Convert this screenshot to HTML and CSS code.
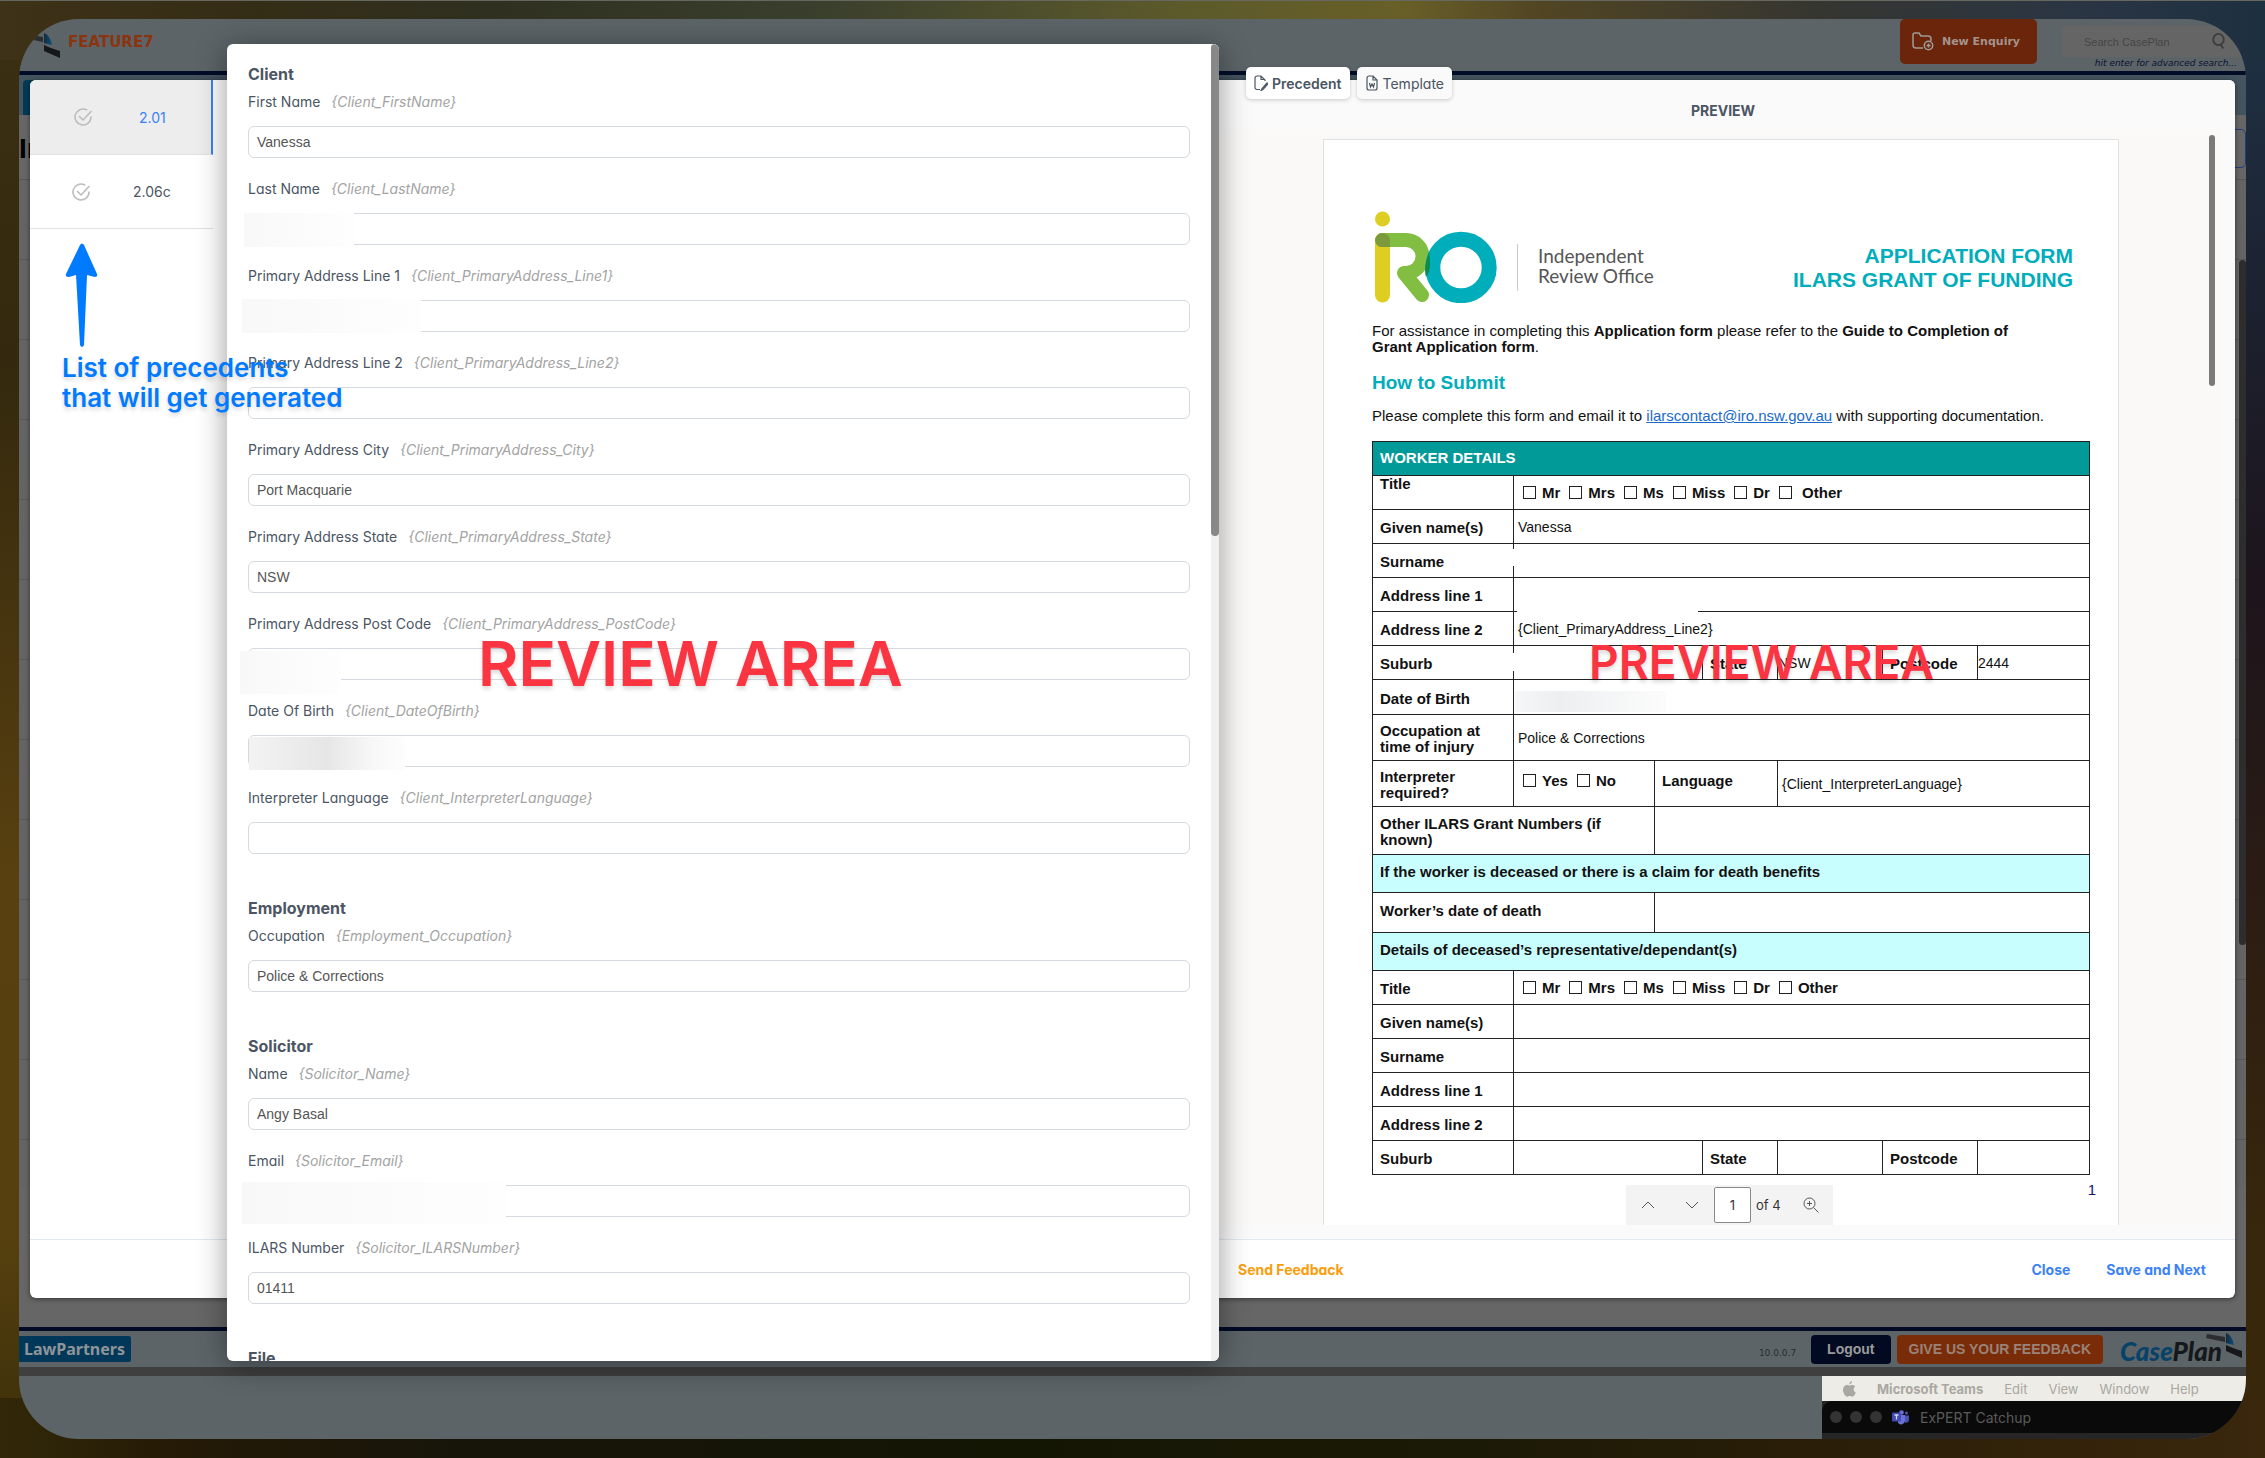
FILE: index.html
```html
<!DOCTYPE html>
<html lang="en">
<head>
<meta charset="utf-8">
<title>CasePlan - Precedents</title>
<link rel="stylesheet" href="styles.css">
</head>
<body>
<svg class="defs" width="0" height="0" aria-hidden="true">
  <defs>
    <linearGradient id="wing" x1="0" x2="1"><stop offset="0" stop-color="#14293a"/><stop offset="1" stop-color="#0a5180"/></linearGradient>
    <symbol id="swoosh" viewBox="0 0 36 26">
      <path d="M1 1 19 4v5L0 5z" fill="#2b2d2f"/>
      <path d="M20 0q6 2 8 12l-8-2z" fill="url(#wing)"/>
      <path d="M20 12q6 3 16 6v7l-16-7z" fill="#151719"/>
    </symbol>
    <symbol id="check" viewBox="0 0 18 18">
      <path d="M12.500 1.800A8 8 0 1 0 17 9M5.500 8.500l3.500 3.500 8-8.500" fill="none" stroke="#bdbdbd" stroke-width="1.600" stroke-linecap="round" stroke-linejoin="round"/>
    </symbol>
  </defs>
</svg>

<div class="desktop">
  <header class="topbar">
    <svg class="topbar-mark" width="36" height="26"><use href="#swoosh"/></svg>
    <strong class="env">FEATURE7</strong>
    <button class="enquiry" type="button">
      <svg width="22" height="19" viewBox="0 0 22 19" fill="none" stroke="#a09a98" stroke-width="1.500"><path d="M11 16H4a3 3 0 0 1-3-3V3a2 2 0 0 1 2-2h4l2 3h7a3 3 0 0 1 3 3v2"/><circle cx="16.500" cy="13.500" r="4.200"/><path d="M16.500 11.500v4M14.500 13.500h4"/></svg>
      New Enquiry
    </button>
    <div class="search">
      <div class="search-box">
        <input type="search" placeholder="Search CasePlan" aria-label="Search CasePlan">
        <svg width="14" height="17" viewBox="0 0 14 17" fill="none" stroke="#3c3c3c" stroke-width="1.800"><ellipse cx="6.500" cy="6.500" rx="5.300" ry="5.600"/><path d="m8.500 11.500 3 4"/></svg>
      </div>
      <em>hit enter for advanced search...</em>
    </div>
  </header>
  <div class="subnav"><span class="subnav-tab"></span></div>
  <div class="backdrop-page">
    <div class="page-title">Invoice<span class="outline-box"></span></div>
    <div class="page-rows"></div>
    <span class="page-scroll"></span>
  </div>
  <footer class="bottombar">
    <span class="lawpartners">LawPartners</span>
    <span class="version">10.0.0.7</span>
    <button class="logout" type="button">Logout</button>
    <button class="feedback" type="button">GIVE US YOUR FEEDBACK</button>
    <span class="brand"><b><i>Case</i>Plan</b><svg width="36" height="26"><use href="#swoosh"/></svg></span>
  </footer>
  <div class="dock">
    <div class="teams">
      <nav class="menubar">
        <svg width="13" height="16" viewBox="0 0 13 16" fill="#a9a7a2"><path d="M9 0c.2 1.700-1.200 3.300-2.600 3.400C6.200 1.800 7.500.2 9 0zM6.600 4.600C7.400 4.600 8 4 9.300 4c1.200 0 2.300.6 3 1.600-2.500 1.500-2.100 4.900.5 5.900-.7 2-2 4.200-3.500 4.200-1 0-1.300-.6-2.500-.6s-1.600.6-2.500.6C2.200 15.700 0 12 0 8.800 0 5.700 2 4.100 3.900 4.100c1.200 0 2 .5 2.700.5z"/></svg>
        <strong>Microsoft Teams</strong><span>Edit</span><span>View</span><span>Window</span><span>Help</span>
      </nav>
      <div class="titlebar">
        <i></i><i></i><i></i>
        <svg width="17" height="15" viewBox="0 0 17 15"><circle cx="9.500" cy="2.500" r="2.300" fill="#6a71cf"/><circle cx="14.500" cy="3" r="1.600" fill="#4a51ae"/><path d="M6 5h7v6a4 4 0 0 1-7 2z" fill="#6b72d4"/><path d="M13 5.500h4V10a3 3 0 0 1-4 2.500z" fill="#4a51ae"/><rect y="2.500" width="9" height="9" rx="1" fill="#4049b5"/><path d="M2.500 5h4M4.500 5v4.500" stroke="#d5d8f5" stroke-width="1.300"/></svg>
        <span>ExPERT Catchup</span>
      </div>
    </div>
  </div>

  <section class="modal" role="dialog" aria-label="Review precedents">
    <nav class="precedents">
      <button class="precedent active" type="button"><svg width="18" height="18"><use href="#check"/></svg><span>2.01</span></button>
      <button class="precedent" type="button"><svg width="18" height="18"><use href="#check"/></svg><span>2.06c</span></button>
    </nav>
    <div class="preview">
      <h2 class="preview-title">PREVIEW</h2>
      <div class="viewer">
        <article class="sheet">
          <div class="letterhead">
            <svg width="126" height="92" viewBox="0 0 126 92" fill="none" stroke-linecap="round" stroke-linejoin="round">
              <circle cx="10.500" cy="8" r="7.500" fill="#dece22"/>
              <path d="M10.500 29.500v54.500" stroke="#dece22" stroke-width="15"/>
              <path d="M10.500 29H34a16.500 16.500 0 0 1 0 33H32l18 22" stroke="#82be41" stroke-width="14"/>
              <path d="M10.500 22A7.500 7.500 0 0 0 3 29.500 7 7 0 0 0 10 36h8v-7a7.500 7.500 0 0 0-7.500-7z" fill="#7a9a3c"/>
              <circle cx="89" cy="56.500" r="28.200" stroke="#00adbb" stroke-width="15"/>
              <path d="M57.300 41q-6 14-3.300 25 4-5 4-13 0-7-.7-12z" fill="#0c8a4b"/>
            </svg>
            <p class="office">Independent<br>Review Office</p>
            <h1>APPLICATION FORM<br>ILARS GRANT OF FUNDING</h1>
          </div>
          <p>For assistance in completing this <b>Application form</b> please refer to the <b>Guide to Completion of<br>Grant Application form</b>.</p>
          <h2>How to Submit</h2>
          <p>Please complete this form and email it to <a href="mailto:ilarscontact@iro.nsw.gov.au">ilarscontact@iro.nsw.gov.au</a> with supporting documentation.</p>
          <table>
            <colgroup><col class="c1"><col class="c2"><col class="c3"><col class="c4"><col class="c5"><col class="c6"><col class="c7"></colgroup>
            <tbody>
            <tr><th colspan="7" class="band">WORKER DETAILS</th></tr>
            <tr class="top"><th>Title</th><td colspan="6"><div class="ticks"><label><input type="checkbox">Mr</label><label><input type="checkbox">Mrs</label><label><input type="checkbox">Ms</label><label><input type="checkbox">Miss</label><label><input type="checkbox">Dr</label><label><input type="checkbox">&nbsp;Other</label></div></td></tr>
            <tr><th>Given name(s)</th><td colspan="6">Vanessa</td></tr>
            <tr><th>Surname</th><td colspan="6"><span class="mask mask-surname"></span></td></tr>
            <tr><th>Address line 1</th><td colspan="6"><span class="mask mask-line"></span></td></tr>
            <tr><th>Address line 2</th><td colspan="6">{Client_PrimaryAddress_Line2}</td></tr>
            <tr><th>Suburb</th><td colspan="2"><span class="mask mask-suburb"></span></td><th>State</th><td class="tight">NSW</td><th>Postcode</th><td class="tight">2444</td></tr>
            <tr class="r35"><th>Date of Birth</th><td colspan="6"><span class="mask mask-birth"></span></td></tr>
            <tr class="r46"><th>Occupation at time of injury</th><td colspan="6">Police &amp; Corrections</td></tr>
            <tr class="r46"><th>Interpreter required?</th><td><div class="ticks"><label><input type="checkbox">Yes</label><label><input type="checkbox">No</label></div></td><th colspan="2" class="raised">Language</th><td colspan="3">{Client_InterpreterLanguage}</td></tr>
            <tr class="r48"><th colspan="2">Other ILARS Grant Numbers (if known)</th><td colspan="5"></td></tr>
            <tr class="r38"><th colspan="7" class="sub">If the worker is deceased or there is a claim for death benefits</th></tr>
            <tr class="r40"><th colspan="2">Worker’s date of death</th><td colspan="5"></td></tr>
            <tr class="r38"><th colspan="7" class="sub">Details of deceased’s representative/dependant(s)</th></tr>
            <tr><th>Title</th><td colspan="6"><div class="ticks"><label><input type="checkbox">Mr</label><label><input type="checkbox">Mrs</label><label><input type="checkbox">Ms</label><label><input type="checkbox">Miss</label><label><input type="checkbox">Dr</label><label><input type="checkbox">Other</label></div></td></tr>
            <tr><th>Given name(s)</th><td colspan="6"></td></tr>
            <tr><th>Surname</th><td colspan="6"></td></tr>
            <tr><th>Address line 1</th><td colspan="6"></td></tr>
            <tr><th>Address line 2</th><td colspan="6"></td></tr>
            <tr><th>Suburb</th><td colspan="2"></td><th>State</th><td></td><th>Postcode</th><td></td></tr>
            </tbody>
          </table>
          <p class="page-no">1</p>
        </article>
        <span class="viewer-scroll"></span>
        <div class="pager">
          <button type="button" aria-label="Previous page"><svg width="14" height="8" viewBox="0 0 14 8" fill="none" stroke="#555"><path d="m1 7 6-6 6 6"/></svg></button>
          <button type="button" aria-label="Next page"><svg width="14" height="8" viewBox="0 0 14 8" fill="none" stroke="#555"><path d="m1 1 6 6 6-6"/></svg></button>
          <input type="text" value="1" aria-label="Page"><span>of 4</span>
          <button type="button" aria-label="Zoom in"><svg width="16" height="16" viewBox="0 0 16 16" fill="none" stroke="#555"><circle cx="6.500" cy="6.500" r="5.500"/><path d="M6.500 4v5M4 6.500h5M10.500 10.500l5 5"/></svg></button>
        </div>
      </div>
    </div>
    <footer class="actions">
      <button class="send" type="button">Send Feedback</button>
      <button type="button">Close</button>
      <button type="button">Save and Next</button>
    </footer>
    <div class="tabs">
      <button class="on" type="button"><svg width="14" height="16" viewBox="0 0 14 16" fill="none" stroke="#4b5563" stroke-width="1.200"><path d="M6 14.500H3A2 2 0 0 1 1 12.500V3a2 2 0 0 1 2-2h4l4 4v1M7 1v3.500h4M13 8l-5 5.500-1 2 2-1 4.500-5z"/></svg>Precedent</button>
      <button type="button"><svg width="14" height="16" viewBox="-1 0 14 16" fill="none" stroke="#4b5563" stroke-width="1.200"><path d="M7 1H3a2 2 0 0 0-2 2v10a2 2 0 0 0 2 2h6a2 2 0 0 0 2-2V5zM7 1v4h4M3.500 8l1 4L6 9l1.500 3 1-4"/></svg>Template</button>
    </div>

    <form class="review">
      <div class="review-body">
        <fieldset>
          <legend>Client</legend>
          <div class="field"><label for="f1">First Name <i>{Client_FirstName}</i></label><input id="f1" value="Vanessa"></div>
          <div class="field"><label for="f2">Last Name <i>{Client_LastName}</i></label><input id="f2"><span class="blur blur-last"></span></div>
          <div class="field"><label for="f3">Primary Address Line 1 <i>{Client_PrimaryAddress_Line1}</i></label><input id="f3"><span class="blur blur-line"></span></div>
          <div class="field"><label for="f4">Primary Address Line 2 <i>{Client_PrimaryAddress_Line2}</i></label><input id="f4"></div>
          <div class="field"><label for="f5">Primary Address City <i>{Client_PrimaryAddress_City}</i></label><input id="f5" value="Port Macquarie"></div>
          <div class="field"><label for="f6">Primary Address State <i>{Client_PrimaryAddress_State}</i></label><input id="f6" value="NSW"></div>
          <div class="field"><label for="f7">Primary Address Post Code <i>{Client_PrimaryAddress_PostCode}</i></label><input id="f7"><span class="blur blur-post"></span></div>
          <div class="field"><label for="f8">Date Of Birth <i>{Client_DateOfBirth}</i></label><input id="f8"><span class="blur blur-birth"></span></div>
          <div class="field"><label for="f9">Interpreter Language <i>{Client_InterpreterLanguage}</i></label><input id="f9"></div>
        </fieldset>
        <fieldset>
          <legend>Employment</legend>
          <div class="field"><label for="f10">Occupation <i>{Employment_Occupation}</i></label><input id="f10" value="Police &amp; Corrections"></div>
        </fieldset>
        <fieldset>
          <legend>Solicitor</legend>
          <div class="field"><label for="f11">Name <i>{Solicitor_Name}</i></label><input id="f11" value="Angy Basal"></div>
          <div class="field"><label for="f12">Email <i>{Solicitor_Email}</i></label><input id="f12"><span class="blur blur-email"></span></div>
          <div class="field"><label for="f13">ILARS Number <i>{Solicitor_ILARSNumber}</i></label><input id="f13" value="01411"></div>
        </fieldset>
        <fieldset>
          <legend>File</legend>
        </fieldset>
      </div>
      <div class="review-scroll"><span></span></div>
    </form>
  </section>
</div>

<svg class="note-arrow" width="34" height="108" viewBox="0 0 34 108" fill="#007aff"><path d="M15 2q2-3 4 0l13 29q1 3-2 3l-8-2-3 70q-2 4-4 0l-4-70-7 2q-4 0-3-3z"/></svg>
<p class="note note-list">List of precedents<br>that will get generated</p>
<p class="note note-review">REVIEW AREA</p>
<p class="note note-preview">PREVIEW AREA</p>
</body>
</html>
```
FILE: styles.css
```css
* { box-sizing: border-box; }
body, p, h1, h2, fieldset, legend { margin: 0; padding: 0; border: 0; }
button { border: 0; background: none; padding: 0; font: inherit; color: inherit; cursor: pointer; }
input { font: inherit; color: inherit; }
.defs { position: absolute; }

body {
  position: relative;
  height: 100vh;
  padding: 18px 19px 19px;
  overflow: hidden;
  border-top: 1px solid #66675e;
  font-family: Inter, "Liberation Sans", sans-serif;
  background:
    linear-gradient(90deg, #3e3218 0%, #352d15 10%, #2f3020 22%, #3a3f2d 36%, #5c5a2b 52%, #685f28 62%, #514523 68%, #363630 80%, #2a3544 92%, #1d3040 100%) top / 100% 60px no-repeat,
    linear-gradient(90deg, #322808 0%, #241a06 8%, #17150a 20%, #141604 45%, #1b1a06 65%, #2a1e08 80%, #3a270c 100%) bottom / 100% 60px no-repeat,
    linear-gradient(#3b3012, #34290e 25%, #584010 60%, #56400f 85%, #3a2e0a) left / 60px 100% no-repeat,
    linear-gradient(#1f3347, #1c2230 20%, #1d141c 40%, #2a1c14 60%, #38270c 85%, #3a270b) right / 60px 100% no-repeat,
    #222;
}

/* Dimmed application window */
.desktop {
  position: relative;
  height: 100%;
  display: flex;
  flex-direction: column;
  border-radius: 60px;
  overflow: hidden;
  background: #5c6468;
}
.topbar {
  display: flex;
  align-items: flex-start;
  height: 56px;
  border-bottom: 4px solid #020c26;
}
.topbar-mark { margin: 14px 0 0 5px; }
.env { margin: 13px auto 0 8px; font: bold 15px/20px "DejaVu Sans", sans-serif; color: #8a3410; }
.enquiry {
  display: flex;
  align-items: center;
  gap: 8px;
  height: 45px;
  padding: 0 17px 0 12px;
  border-radius: 5px;
  background: #6b250a;
  color: #a3938c;
  font: bold 11px/16px "DejaVu Sans", sans-serif;
}
.search { width: 184px; margin-left: 25px; padding-top: 7px; text-align: right; }
.search-box { display: flex; align-items: center; height: 31px; padding: 0 20px; border-radius: 3px; background: #656565; }
.search-box input { width: 100%; min-width: 0; border: 0; background: none; font: 11px/16px "Liberation Sans", sans-serif; }
.search-box input::placeholder { color: #454545; }
.search-box svg { flex: none; }
.search em { display: block; margin-right: 9px; font: italic 9px/13px "DejaVu Sans", sans-serif; color: #0b1233; white-space: nowrap; }
.subnav { height: 40px; padding: 5px 4px 0; background: #44545f; }
.subnav-tab { display: block; width: 120px; height: 35px; border-radius: 4px 0 0; background: #023a54; }
.backdrop-page { position: relative; flex: 1; display: flex; flex-direction: column; background: #666; }
.page-title { display: flex; justify-content: space-between; height: 64px; padding-top: 14px; font: bold 28px/40px "Liberation Sans", sans-serif; color: #000; }
.outline-box { width: 60px; height: 39px; border: 1px solid #1e3f7a; border-radius: 5px; }
.page-rows { height: 1008px; background: repeating-linear-gradient(#575757 0 1px, #646464 1px 80px); }
.page-scroll { position: absolute; right: 0; top: 145px; width: 7px; height: 685px; border-radius: 4px; background: #2d2d2d; }
.bottombar {
  display: flex;
  align-items: center;
  height: 40px;
  padding-right: 4px;
  border-top: 4px solid #020a26;
}
.lawpartners { margin-right: auto; padding: 0 6px 0 5px; border-radius: 0 2px 2px 0; background: #01385a; color: #8f9498; font: bold 16px/26px "Noto Sans", sans-serif; }
.version { margin: 8px 15px 0 0; font: 9px/12px "DejaVu Sans", sans-serif; color: #2a2d30; }
.logout, .feedback { height: 29px; border-radius: 4px; color: #9a9a9a; font: bold 14px/20px "Liberation Sans", sans-serif; }
.logout { padding: 0 16px; background: #020a22; }
.feedback { margin: 0 17px 0 6px; padding: 0 12px; background: #7a2c08; color: #998277; }
.brand { display: flex; align-items: center; font: italic bold 26px/30px Lato, sans-serif; color: #15181a; }
.brand i { color: #074268; }
.brand b { padding-top: 4px; }
.brand svg { margin: 0 0 6px -16px; }
.dock { height: 72px; display: flex; justify-content: flex-end; border-top: 9px solid #3f3f3f; }
.teams { width: 424px; background: #262626; }
.menubar { display: flex; align-items: center; gap: 21px; height: 25px; padding-left: 21px; background: #eeece6; color: #a9a7a2; font-size: 13px; line-height: 20px; }
.titlebar { display: flex; align-items: center; gap: 8px; height: 32px; padding-left: 8px; border-radius: 10px 0 0; background: #0a0a0a; color: #5a5a5a; font-size: 14px; }
.titlebar i { width: 12px; height: 12px; border-radius: 50%; background: #333; }
.titlebar svg { margin: 0 3px 0 2px; }

/* Modal */
.modal {
  position: absolute;
  inset: 61px 11px 141px;
  display: grid;
  grid-template: "list preview" 1fr "foot foot" 59px / 183px 1fr;
  border-radius: 6px;
  background: #fff;
  box-shadow: 0 1px 5px rgba(0, 0, 0, .5);
  color: #4b5563;
}
.precedents { grid-area: list; }
.precedent { display: flex; align-items: center; width: 100%; height: 74px; border-bottom: 1px solid #e2e2e2; font-size: 14px; }
.precedent svg { margin-left: 42px; }
.precedent span { margin-left: 43px; }
.precedent.active { height: 75px; border-right: 2px solid #3b82f6; border-radius: 6px 0 0; background: #ededed; color: #3b82f6; }
.precedent.active svg { margin-left: 44px; }
.precedent.active span { margin-left: 47px; }
.preview { grid-area: preview; width: 1024px; justify-self: end; display: flex; flex-direction: column; min-height: 0; padding: 0 13px 14px; border-radius: 0 6px 0 0; background: #fafafa; }
.preview-title { padding: 21px 0 8px; font-size: 14px; line-height: 20px; font-weight: 700; text-align: center; }
.viewer { position: relative; flex: 1; min-height: 0; padding: 10px 99px 0; overflow: hidden; background: #faf9f8; }
.actions { grid-area: foot; display: flex; align-items: center; gap: 36px; padding-right: 29px; border-top: 1px solid #e2e8f0; font-size: 14px; font-weight: 700; color: #3b82f6; }
.actions, .preview-title, .tabs, .review label, .review legend { font-feature-settings: "cv11"; }
.actions .send { margin-left: 1208px; margin-right: auto; color: #f99d0c; }
.tabs { position: absolute; top: -13px; left: 1216px; display: flex; gap: 7px; font-size: 14px; }
.tabs button { display: flex; align-items: center; gap: 4px; height: 32px; padding: 0 8px; border-radius: 5px; background: #fafafa; box-shadow: 0 1px 4px rgba(0, 0, 0, .2); }
.tabs .on { background: #fff; font-weight: 600; }

/* Document sheet */
.sheet {
  width: 796px;
  height: 1126px;
  padding: 71px 28px 0 48px;
  border: 1px solid #dfe1e3;
  background: #fff;
  color: #111;
  font: 15px/16px "Liberation Sans", Arial, sans-serif;
}
.letterhead { display: flex; margin-bottom: 20px; }
.office { margin: 33px 0 0 19px; padding-left: 20px; border-left: 1px solid #ccc; height: 47px; font: 19px/20px Lato, sans-serif; color: #555; padding-top: 2px; }
.letterhead h1 { margin: 33px 17px 0 auto; font-size: 21px; line-height: 24px; text-align: right; color: #00adbb; }
.sheet h2 { margin: 16px 0 13px; font-size: 19px; line-height: 24px; color: #00adbb; }
.sheet a { color: #1b6ac9; }
.sheet table { width: 100%; margin-top: 17px; border-collapse: collapse; table-layout: fixed; }
.c1, .c2 { width: 141px; }
.c3 { width: 48px; }
.c4 { width: 75px; }
.c5 { width: 105px; }
.c6 { width: 95px; }
.sheet tr { height: 34px; }
.sheet tr.r35 { height: 35px; }
.sheet tr.r38 { height: 38px; }
.sheet tr.r40 { height: 40px; }
.sheet tr.r46 { height: 46px; }
.sheet tr.r48 { height: 48px; }
.sheet th, .sheet td { padding: 0 7px; border: 1px solid #222; text-align: left; }
.sheet th { padding-top: 3px; }
.sheet td { position: relative; padding-left: 4px; font-size: 14px; }
.sheet td.tight { padding-left: 0; }
.sheet .r38 th, .sheet .r40 th { padding: 0 7px 4px; }
.sheet .raised { padding: 0 7px 6px; }
.sheet .band { height: 33px; padding: 0 7px 2px; background: #029a98; color: #fff; }
.sheet .sub { background: #c9feff; }
.sheet .top th { padding-top: 0; vertical-align: top; }
.ticks { display: flex; gap: 9px; padding-left: 5px; font-size: 15px; font-weight: bold; }
.ticks label { display: flex; align-items: center; gap: 6px; }
.ticks input { appearance: none; width: 13px; height: 13px; margin: 0; border: 1px solid #222; }
.r46 .ticks { padding-bottom: 6px; }
.page-no { margin: 7px -6px 0 0; text-align: right; color: #14146e; }
.mask { position: absolute; background: #fff; }
.mask-surname { left: -2px; top: 5px; width: 70px; height: 17px; }
.mask-line { left: 3px; top: 4px; width: 181px; height: 32px; }
.mask-suburb { left: -2px; top: 7px; width: 60px; height: 18px; }
.mask-birth { left: 1px; top: 11px; width: 151px; height: 21px; background: linear-gradient(90deg, #f6f7f8, #eceef0 30%, #f4f5f6 60%, #fcfcfc); }
.viewer-scroll { position: absolute; top: 6px; right: 7px; width: 6px; height: 251px; border-radius: 3px; background: #7a7a78; }
.pager { position: absolute; left: 402px; bottom: 0; display: flex; align-items: center; width: 207px; height: 40px; background: #f3f3f3; font-size: 13px; color: #333; }
.pager button { display: flex; justify-content: center; width: 44px; }
.pager input { width: 37px; height: 36px; padding: 0; border: 1px solid #888; border-radius: 2px; background: #fff; text-align: center; }
.pager span { width: 38px; padding-left: 5px; white-space: nowrap; }

/* Review form */
.review {
  position: absolute;
  left: 197px;
  top: -36px;
  bottom: -63px;
  width: 45%;
  display: flex;
  border-radius: 6px;
  overflow: hidden;
  background: #fff;
  box-shadow: 0 4px 30px rgba(0, 0, 0, .4);
}
.review-body { flex: 1; padding: 17px 21px 0; }
.review fieldset { min-width: 0; margin-bottom: 20px; }
.review legend { display: block; margin-bottom: 5px; font-size: 16px; line-height: 26px; font-weight: 700; }
.field { position: relative; display: flex; flex-direction: column; gap: 14px; margin-bottom: 21px; }
.field label { font-size: 14px; line-height: 20px; }
.field i { margin-left: 7px; color: #a3a3a3; }
.field input { height: 32px; padding: 0 8px; border: 1px solid #d5d9e0; border-radius: 6px; font: 14px/20px "Liberation Sans", sans-serif; color: #555; }
.blur { position: absolute; left: -6px; background: linear-gradient(90deg, #f8f8f8, #fbfbfb 50%, #fefefe); }
.blur-last { left: -4px; top: 34px; width: 110px; height: 34px; }
.blur-line { top: 33px; width: 179px; height: 34px; }
.blur-post { left: -8px; top: 37px; width: 101px; height: 43px; }
.blur-birth { left: 1px; top: 36px; width: 156px; height: 33px; background: linear-gradient(90deg, #f3f3f3, #e6e6e6 50%, #f8f8f8 80%, #fdfdfd); }
.blur-email { top: 31px; width: 264px; height: 42px; }
.review-scroll { width: 8px; background: #f0f0f0; }
.review-scroll span { display: block; height: 492px; border-radius: 4px; background: #888; }

/* Annotations drawn over the window */
.note { position: absolute; font-weight: 600; white-space: nowrap; text-shadow: 0 3px 4px rgba(0, 0, 0, .15); }
.note-list { left: 62px; top: 352px; font-size: 26px; line-height: 30px; color: #007aff; }
.note-arrow { position: absolute; left: 65px; top: 242px; }
.note-review { left: 478px; top: 624px; font-size: 62px; line-height: 78px; color: #fa3441; }
.note-preview { left: 1589px; top: 631px; font-size: 46px; line-height: 60px; color: #fa3441; }
```
